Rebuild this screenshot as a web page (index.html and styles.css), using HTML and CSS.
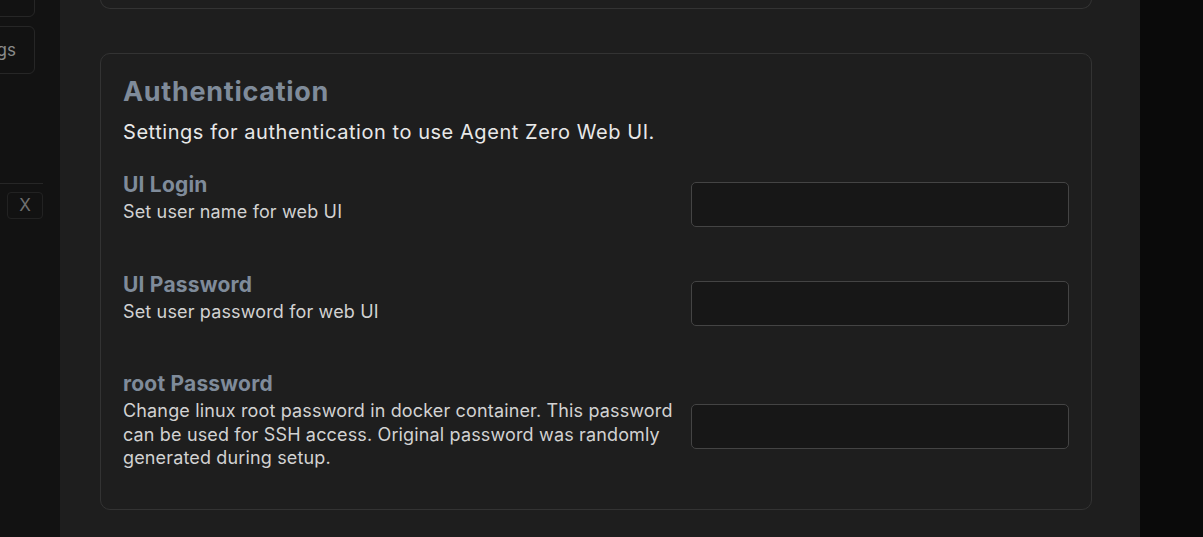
FILE: index.html
```html
<!DOCTYPE html>
<html>
<head>
<meta charset="utf-8">
<link rel="stylesheet" href="styles.css">
</head>
<body>
<div class="app">
  <aside class="sidebar">
    <div class="side-btn side-btn-top">e</div>
    <div class="side-btn side-btn-gs">gs</div>
    <div class="side-spacer"></div>
    <div class="side-divider"></div>
    <div class="side-x">X</div>
  </aside>
  <main class="main">
    <div class="prev-card"></div>
    <section class="card">
      <h2 class="card-title">Authentication</h2>
      <p class="card-desc">Settings for authentication to use Agent Zero Web UI.</p>
      <div class="field">
        <div class="field-text">
          <div class="field-label">UI Login</div>
          <div class="field-help">Set user name for web UI</div>
        </div>
        <input class="field-input" type="text">
      </div>
      <div class="field">
        <div class="field-text">
          <div class="field-label">UI Password</div>
          <div class="field-help">Set user password for web UI</div>
        </div>
        <input class="field-input" type="password">
      </div>
      <div class="field">
        <div class="field-text">
          <div class="field-label">root Password</div>
          <div class="field-help">Change linux root password in docker container. This password can be used for SSH access. Original password was randomly generated during setup.</div>
        </div>
        <input class="field-input" type="password">
      </div>
    </section>
  </main>
  <div class="backdrop"></div>
</div>
</body>
</html>
```

FILE: styles.css
```css
* { box-sizing: border-box; }
html, body {
  margin: 0;
  padding: 0;
  height: 100%;
  overflow: hidden;
  background: #0a0a0a;
  font-family: "Inter", "Noto Sans", sans-serif;
}
.app {
  display: flex;
  height: 537px;
}
.sidebar {
  width: 60px;
  flex: none;
  background: #121212;
  display: flex;
  flex-direction: column;
  overflow: hidden;
}
.side-btn {
  width: 80px;
  margin-left: -45px;
  border: 1px solid #262626;
  border-radius: 6px;
  color: #8a8a8a;
  font-size: 17px;
  text-align: right;
  padding-right: 18px;
}
.side-btn-top {
  height: 40px;
  margin-top: -23px;
  line-height: 32px;
}
.side-btn-gs {
  height: 48px;
  margin-top: 9px;
  line-height: 46px;
}
.side-spacer { height: 109px; }
.side-divider {
  width: 43px;
  height: 1px;
  background: #262626;
}
.side-x {
  margin: 8px 0 0 7px;
  width: 36px;
  height: 27px;
  border: 1px solid #222;
  border-radius: 4px;
  color: #6f6f6f;
  font-size: 17px;
  text-align: center;
  line-height: 25px;
}
.main {
  width: 1080px;
  flex: none;
  background: #1e1e1e;
  padding: 0 48px 0 40px;
}
.prev-card {
  height: 10px;
  margin-top: -1px;
  border: 1px solid #333;
  border-top: none;
  border-radius: 0 0 10px 10px;
}
.card {
  margin-top: 44px;
  border: 1px solid #333;
  border-radius: 10px;
  padding: 22px 22px 26px 22px;
}
.card-title {
  margin: 0;
  font-size: 27px;
  letter-spacing: 0.7px;
  font-weight: 700;
  color: #7f8b9a;
  line-height: 32px;
}
.card-desc {
  margin: 11px 0 27px;
  font-size: 20px;
  letter-spacing: 0.55px;
  color: #e8e8e8;
  line-height: 26px;
}
.field {
  display: flex;
  align-items: center;
  gap: 12px;
  margin-bottom: 35px;
}
.field:last-child { margin-bottom: 0; }
.field-text {
  flex: 1;
  min-width: 0;
  padding-bottom: 13px;
}
.field-label {
  font-size: 21px;
  letter-spacing: 0.2px;
  font-weight: 700;
  color: #7f8b9a;
  line-height: 26px;
}
.field-help {
  font-size: 18px;
  letter-spacing: 0.15px;
  color: #d2d2d2;
  line-height: 23.5px;
  margin-top: 2px;
}
.field-input {
  flex: none;
  width: 378px;
  height: 45px;
  background: #171717;
  border: 1px solid #444;
  border-radius: 5px;
  outline: none;
  color: #ddd;
  margin: 0;
}
.backdrop {
  flex: 1;
  background: #0a0a0a;
}
```
